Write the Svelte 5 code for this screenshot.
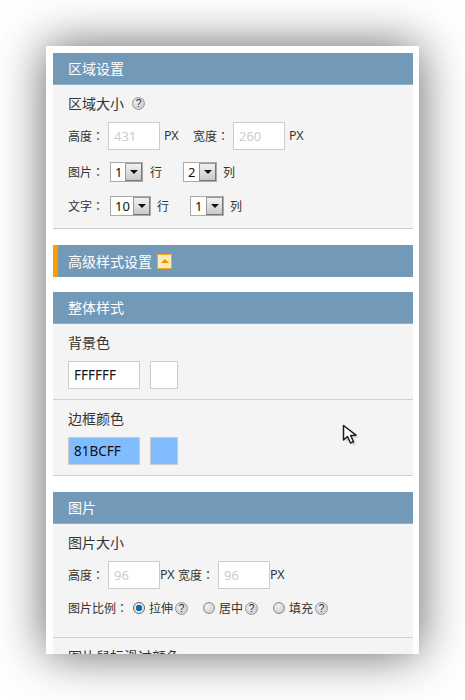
<script>
  const sq = ['整体样式'];
</script>

{#snippet help()}
  <span class="help">?</span>
{/snippet}

{#snippet select(value, cls = '')}
  <span class="select {cls}">
    <span class="val">{value}</span>
    <span class="btn"><i></i></span>
  </span>
{/snippet}

{#snippet radio(label, on, cls = '')}
  <span class="radio-item {cls}">
    <span class="radio" class:on></span>
    <span class="cn">{label}</span>
    {@render help()}
  </span>
{/snippet}

<div class="stage">
  <div class="window">
    <section>
      <h3>区域设置</h3>
      <div class="body first">
        <div class="label">区域大小 {@render help()}</div>
        <div class="row rh">
          <span class="cn k">高度<i class="colon">：</i></span>
          <span class="input muted">431</span>
          <span class="px">PX</span>
          <span class="cn k w2">宽度<i class="colon">：</i></span>
          <span class="input muted">260</span>
          <span class="px">PX</span>
        </div>
        <div class="row r2">
          <span class="cn k k2">图片<i class="colon">：</i></span>
          {@render select('1', 's33')}
          <span class="cn u u1">行</span>
          {@render select('2', 's34 gap')}
          <span class="cn u">列</span>
        </div>
        <div class="row r3">
          <span class="cn k k2">文字<i class="colon">：</i></span>
          {@render select('10', 's41')}
          <span class="cn u">行</span>
          {@render select('1', 's34 gap')}
          <span class="cn u">列</span>
        </div>
      </div>
    </section>

    <section>
      <h3 class="adv">高级样式设置 <span class="toggle"><i></i></span></h3>
    </section>

    <section>
      <h3 class="tight">{sq[0]}</h3>
      <div class="body color">
        <div class="label">背景色</div>
        <div class="row">
          <span class="input hex">FFFFFF</span>
          <span class="swatch"></span>
        </div>
      </div>
      <div class="body color">
        <div class="label">边框颜色</div>
        <div class="row">
          <span class="input hex blue">81BCFF</span>
          <span class="swatch blue"></span>
        </div>
      </div>
    </section>

    <section>
      <h3>图片</h3>
      <div class="body image">
        <div class="label">图片大小</div>
        <div class="row">
          <span class="cn k">高度<i class="colon">：</i></span>
          <span class="input muted">96</span>
          <span class="px tight">PX</span>
          <span class="cn k w3">宽度<i class="colon">：</i></span>
          <span class="input muted">96</span>
          <span class="px tight">PX</span>
        </div>
        <div class="row radios">
          <span class="cn k k3">图片比例<i class="colon">：</i></span>
          {@render radio('拉伸', true)}
          {@render radio('居中', false)}
          {@render radio('填充', false)}
        </div>
      </div>
      <div class="body last">
        <div class="label">图片鼠标滑过颜色</div>
      </div>
    </section>

    <svg class="cursor" width="18" height="24" viewBox="0 0 18 24">
      <path d="M2.5 1.5 V17 L6.5 13.5 L9.5 20 L12.5 18.7 L9.7 12.5 L15 12.2 Z" fill="#aaa" opacity=".45" transform="translate(1.5 1.5)"/>
      <path d="M1.5 1.5 V16 L5.5 12.5 L8.5 19 L11.5 17.7 L8.7 11.5 L14 11.2 Z" fill="#fff" stroke="#1c1c24" stroke-width="1.5" stroke-linejoin="round"/>
    </svg>
  </div>
</div>

<style>
  :global(body) {
    margin: 0;
    background: #fff;
    overflow: hidden;
  }
  .stage {
    height: 700px;
    padding: 46px 0 0 46px;
    box-sizing: border-box;
  }
  .window {
    position: relative;
    width: 373px;
    height: 608px;
    box-sizing: border-box;
    padding: 7px 6px 0 7px;
    background: #fff;
    overflow: hidden;
    box-shadow: 0 0 46px rgba(0, 0, 0, 0.62);
    font: 13px/20px "Noto Sans", "Noto Sans CJK SC", sans-serif;
    color: #333;
  }
  section {
    margin-bottom: 16px;
  }
  h3 {
    margin: 0;
    height: 32px;
    box-sizing: border-box;
    padding-left: 15px;
    background: #7299b7;
    border-bottom: 1px solid #8fb3cc;
    color: #fff;
    font: 400 14px/31px "Noto Sans CJK SC", sans-serif;
  }
  h3.adv {
    display: flex;
    align-items: center;
    gap: 5px;
    padding-left: 10px;
    border-left: 5px solid #ff9c00;
    border-bottom: 0;
    margin-bottom: 15px;
  }
  section:has(.adv) {
    margin-bottom: 0;
  }
  .toggle {
    width: 13px;
    height: 13px;
    border: 1px solid #f5a623;
    background: #fdeab8;
    display: flex;
    align-items: center;
    justify-content: center;
  }
  .toggle i {
    width: 0;
    height: 0;
    border: 4px solid transparent;
    border-top: 0;
    border-bottom: 4px solid #f29100;
  }
  .body {
    background: #f4f4f4;
    padding: 8px 0 10px 15px;
    border-bottom: 1px solid #cfcfcf;
  }
  .body.first {
    padding-bottom: 12px;
  }
  .body.image {
    padding-bottom: 19px;
  }
  .body.last {
    border-bottom: 0;
    height: 60px;
  }
  .label {
    height: 20px;
    display: flex;
    align-items: center;
    gap: 8px;
    margin-bottom: 9px;
    font: 14px/20px "Noto Sans CJK SC", sans-serif;
  }
  .row {
    display: flex;
    align-items: center;
  }
  .cn {
    font: 12px/20px "Noto Sans CJK SC", sans-serif;
  }
  .colon {
    font: normal 12px/20px "Noto Sans CJK TC", sans-serif;
  }
  .k {
    width: 40px;
    white-space: nowrap;
  }
  .k2 {
    width: 42px;
  }
  .k3 {
    width: 65px;
  }
  .input {
    width: 52px;
    height: 28px;
    box-sizing: border-box;
    border: 1px solid #ccc;
    background: #fff;
    padding-left: 5px;
    line-height: 26px;
    font-size: 13px;
  }
  .muted {
    color: #ccc;
  }
  .px {
    margin-left: 4px;
    width: 18px;
    font-size: 12.5px;
    color: #333;
  }
  .px.tight {
    margin-left: 0;
  }
  .w2 {
    margin-left: 11px;
  }
  .w3 {
    margin-left: 0;
  }
  .r2 {
    margin-top: 12px;
    height: 20px;
  }
  .r3 {
    margin-top: 14px;
    height: 20px;
  }
  .select {
    height: 20px;
    box-sizing: border-box;
    display: flex;
    border: 1px solid #aaa;
    background: #fff;
  }
  .s33 {
    width: 33px;
  }
  .s34 {
    width: 34px;
  }
  .s41 {
    width: 41px;
  }
  .gap {
    margin-left: 21px;
  }
  .val {
    flex: 1;
    padding-left: 4px;
    font-size: 13px;
    line-height: 18px;
    color: #111;
  }
  .btn {
    width: 17px;
    box-sizing: border-box;
    border: 1px solid #777;
    border-top-color: #999;
    border-left-color: #999;
    background: linear-gradient(#f2f2f2, #c9c9c9);
    display: flex;
    align-items: center;
    justify-content: center;
  }
  .btn i {
    width: 0;
    height: 0;
    border: 4px solid transparent;
    border-bottom: 0;
    border-top: 4px solid #111;
  }
  .u {
    margin-left: 6px;
  }
  .u1 {
    margin-left: 7px;
  }
  .help {
    width: 13px;
    height: 13px;
    box-sizing: border-box;
    flex: none;
    border: 1px solid #999;
    border-radius: 50%;
    background: radial-gradient(circle at 40% 35%, #f4f4f4, #bdbdbd);
    color: #222;
    font: 10px/11px "Liberation Sans", sans-serif;
    text-align: center;
  }
  .hex {
    width: 72px;
    padding-left: 5px;
    color: #111;
    font-size: 13.5px;
  }
  .swatch {
    width: 28px;
    height: 28px;
    box-sizing: border-box;
    border: 1px solid #ccc;
    background: #fff;
    margin-left: 10px;
  }
  .blue {
    background: #81bcff;
  }
  .radios {
    margin-top: 9px;
    height: 20px;
  }
  .radio-item {
    display: flex;
    align-items: center;
    width: 70px;
  }
  .radio {
    width: 12px;
    height: 12px;
    box-sizing: border-box;
    flex: none;
    border: 1px solid #8a8a8a;
    border-radius: 50%;
    background: radial-gradient(circle at 40% 35%, #f2f2f2, #c4c4c4);
    margin-right: 4px;
  }
  .radio.on {
    background: radial-gradient(circle, #0a6fb5 0 3px, #e6e6e6 3.5px);
    border-color: #666;
  }
  .radio-item .help {
    margin-left: 2px;
  }
  .cursor {
    position: absolute;
    left: 296px;
    top: 378px;
  }
</style>
